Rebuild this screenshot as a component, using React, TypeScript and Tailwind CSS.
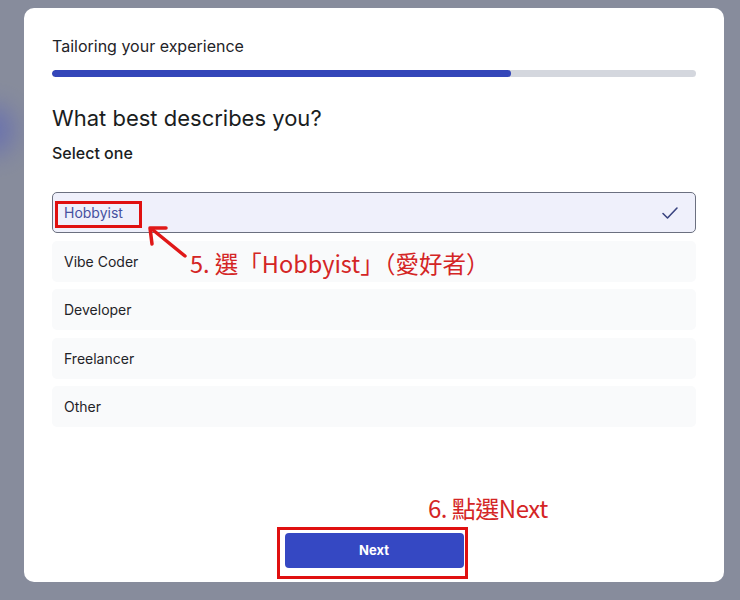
import React from "react";

const options = ["Hobbyist", "Vibe Coder", "Developer", "Freelancer", "Other"];

export default function App() {
  return (
    <div
      className="relative w-[740px] h-[600px] overflow-hidden bg-[#878c9c]"
      style={{ fontFamily: "Inter, 'Noto Sans', sans-serif" }}
    >
      <div className="absolute left-[-30px] top-[105px] w-[45px] h-[50px] rounded-full bg-[#5a63b8] blur-[12px] opacity-60" />
      <div className="absolute left-[24px] top-[8px] w-[700px] h-[574px] rounded-[10px] bg-white px-[28px] pt-[26px] pb-[14px] flex flex-col">
        <div className="text-[16px] leading-[24px] text-[#1f2328]">Tailoring your experience</div>
        <div className="mt-[12px] h-[7px] w-full rounded-full bg-[#d4d7de] overflow-hidden">
          <div className="h-full w-[459px] rounded-full bg-[#3446b9]" />
        </div>
        <div className="mt-[26px] text-[22px] leading-[30px] text-[#1a1d21]">What best describes you?</div>
        <div className="mt-[8px] text-[16px] leading-[24px] font-medium text-[#1a1d21]">Select one</div>
        <div className="mt-[27px] flex flex-col gap-[7.5px]">
          {options.map((o, i) =>
            i === 0 ? (
              <div
                key={o}
                className="h-[41px] rounded-[5px] border border-[#6b7080] bg-[#eff0fb] flex items-center justify-between px-[11px]"
              >
                <span className="text-[14px] text-[#4650a0]">{o}</span>
                <svg width="18" height="14" viewBox="0 0 18 14" className="mr-[5px]">
                  <path d="M2 7.5 L6.5 12 L16 2" fill="none" stroke="#3a4480" strokeWidth="1.6" strokeLinecap="round" strokeLinejoin="round" />
                </svg>
              </div>
            ) : (
              <div key={o} className="h-[41px] rounded-[5px] bg-[#f9fafb] flex items-center px-[12px]">
                <span className="text-[14px] text-[#1f2328]">{o}</span>
              </div>
            )
          )}
        </div>
        <div className="flex-1" />
        <div className="flex justify-center">
          <button className="w-[179px] h-[35px] rounded-[4px] bg-[#3548c3] text-white text-[13px] font-bold">
            Next
          </button>
        </div>

        {/* annotations */}
        <div className="absolute left-[31px] top-[193px] w-[87px] h-[27px] border-[3px] border-[#e01010]" />
        <svg className="absolute left-[120px] top-[212px]" width="70" height="50" viewBox="0 0 70 50">
          <path d="M41 36 L9 10" stroke="#e01818" strokeWidth="3.5" strokeLinecap="round" fill="none" />
          <path d="M8 24 L6 8 L22 8" stroke="#e01818" strokeWidth="3.5" strokeLinecap="round" strokeLinejoin="round" fill="none" />
        </svg>
        <div
          className="absolute left-[166px] top-[239px] text-[23.5px] leading-[32px] text-[#d42525] whitespace-nowrap"
          style={{ fontFamily: "'Noto Sans CJK TC', 'Noto Sans', sans-serif" }}
        >
          5. 選「Hobbyist」（愛好者）
        </div>
        <div
          className="absolute left-[404px] top-[484px] text-[24px] leading-[32px] text-[#d42525] whitespace-nowrap tracking-[-0.5px]"
          style={{ fontFamily: "'Noto Sans CJK TC', 'Noto Sans', sans-serif" }}
        >
          6. 點選Next
        </div>
        <div className="absolute left-[253px] top-[519px] w-[191px] h-[52px] border-[3px] border-[#e01010]" />
      </div>
    </div>
  );
}
